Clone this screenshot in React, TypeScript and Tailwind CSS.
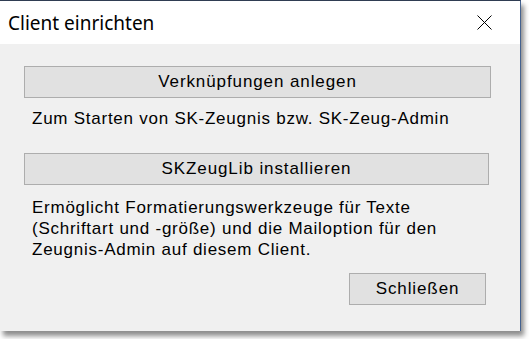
import React from 'react';

const btn =
  'h-[32px] bg-[#e1e1e1] border border-[#adadad] text-[17px] tracking-[0.9px] text-black flex items-center justify-center';

const App: React.FC = () => {
  return (
    <div className="w-[529px] h-[339px] bg-white overflow-hidden">
      <div
        className="relative w-[521px] h-[331px] bg-[#f0f0f0] border-t border-r border-t-[#2f3d52] border-r-[#44628f] shadow-[3px_5px_5px_rgba(0,0,0,0.45)] flex flex-col"
        style={{ fontFamily: '"Liberation Sans", Arial, sans-serif' }}
      >
        <div className="h-[43px] bg-white flex items-center justify-between pl-[8px] pr-[28px]">
          <span
            className="text-[19px] text-black pt-[2px]"
            style={{ fontFamily: '"Noto Sans", "Open Sans", sans-serif' }}
          >
            Client einrichten
          </span>
          <svg width="15" height="15" viewBox="0 0 15 15" className="text-black">
            <path d="M0.5 0.5 L14.5 14.5 M14.5 0.5 L0.5 14.5" stroke="currentColor" strokeWidth="1" />
          </svg>
        </div>

        <div className="flex-1 flex flex-col pl-[24px] pt-[22px]">
          <div className={`${btn} w-[467px]`}>Verknüpfungen anlegen</div>
          <p className="pl-[8px] mt-[10px] text-[17px] tracking-[0.75px] leading-[21px] text-black">
            Zum Starten von SK-Zeugnis bzw. SK-Zeug-Admin
          </p>
          <div className={`${btn} w-[465px] mt-[24px]`}>SKZeugLib installieren</div>
          <p className="pl-[8px] mt-[12px] text-[17px] tracking-[0.75px] leading-[21px] text-black">
            Ermöglicht Formatierungswerkzeuge für Texte
            <br />
            (Schriftart und -größe) und die Mailoption für den
            <br />
            Zeugnis-Admin auf diesem Client.
          </p>
          <div className="flex justify-start pl-[325px] mt-[13px]">
            <div className={`${btn} w-[137px] h-[31px]`}>Schließen</div>
          </div>
        </div>
      </div>
    </div>
  );
};

export default App;
